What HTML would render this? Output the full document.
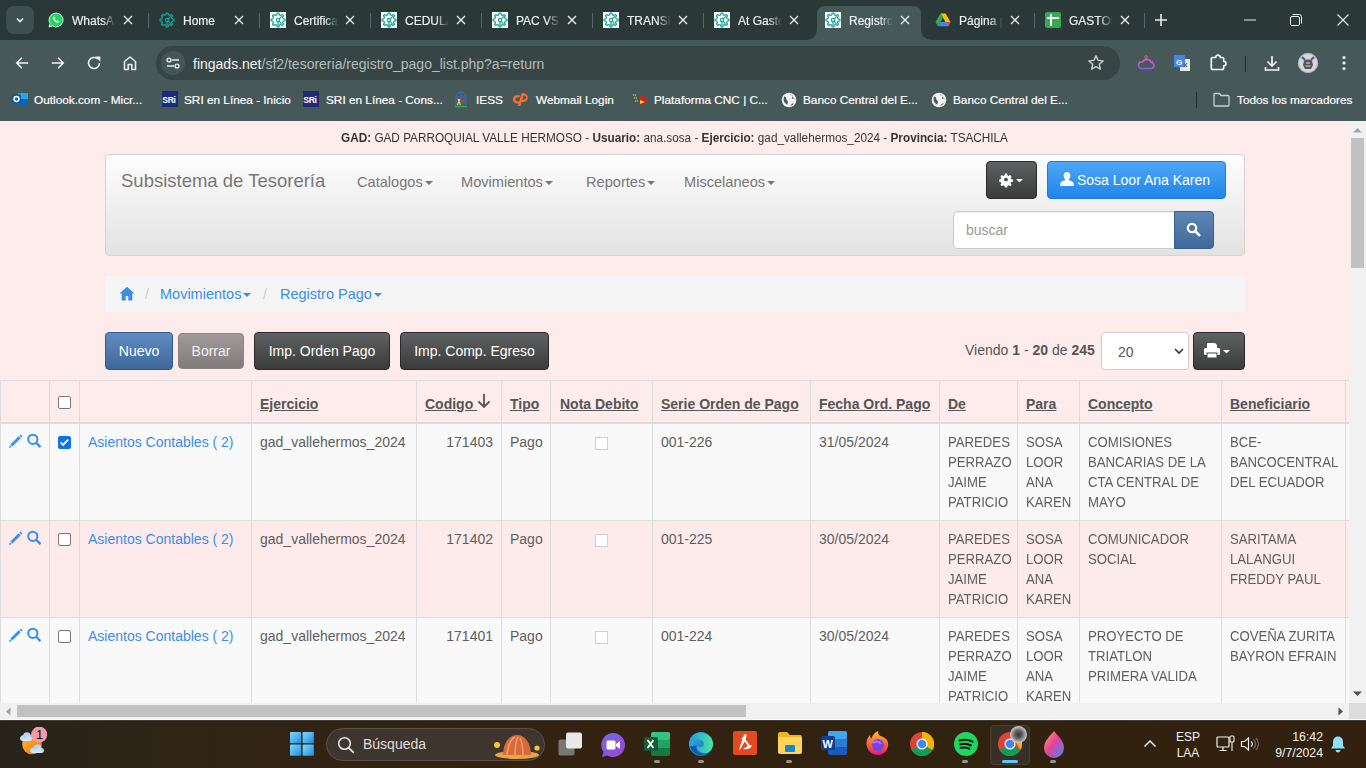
<!DOCTYPE html>
<html><head><meta charset="utf-8">
<style>
*{box-sizing:border-box}
html,body{margin:0;padding:0;width:1366px;height:768px;overflow:hidden;font-family:"Liberation Sans",sans-serif}
.abs{position:absolute}
#tabs{position:absolute;left:0;top:0;width:1366px;height:40px;background:#2b3838}
#toolbar{position:absolute;left:0;top:40px;width:1366px;height:44px;background:#465857}
#bm{position:absolute;left:0;top:84px;width:1366px;height:37px;background:#465857}
#page{position:absolute;left:0;top:121px;width:1349px;height:582px;background:#feecec;overflow:hidden}
#vscroll{position:absolute;left:1349px;top:121px;width:17px;height:582px;background:#f1f1f1}
#hscroll{position:absolute;left:0;top:703px;width:1349px;height:16px;background:#f1f1f1;border-bottom:0}
#corner{position:absolute;left:1349px;top:703px;width:17px;height:16px;background:#dcdcdc}
#wline{position:absolute;left:0;top:719px;width:1366px;height:1px;background:#fafafa}
#taskbar{position:absolute;left:0;top:720px;width:1366px;height:48px;background:linear-gradient(90deg,#28231a 0%,#2f2415 12%,#33220f 45%,#30230f 70%,#33200f 100%)}
.tab{position:absolute;top:0;height:40px;width:111px;color:#eef2f2;font-size:12px;-webkit-text-stroke:.15px #eef2f2}
.tab .fav{position:absolute;left:8px;top:12px;width:16px;height:16px}
.tab .tt{position:absolute;left:32px;top:14px;width:44px;overflow:hidden;white-space:nowrap;-webkit-mask-image:linear-gradient(90deg,#000 70%,transparent)}
.tab .x{position:absolute;left:82px;top:14px;width:12px;height:12px}
.tab.act{color:#f2f4f4}
.bmt{position:absolute;top:92px;font-size:11.8px;line-height:16px;color:#fff;white-space:nowrap;-webkit-text-stroke:.2px #fff}
.nav{position:absolute;top:51px;font-size:14.6px;color:#777;line-height:20px;white-space:nowrap}
.caret{display:inline-block;width:0;height:0;margin-left:2px;vertical-align:middle;border-top:4px solid;border-left:4px solid transparent;border-right:4px solid transparent}
.btn{border-radius:4px;color:#fff;font-size:14px;text-align:center;display:flex;align-items:center;justify-content:center;white-space:nowrap}
.dark{background:linear-gradient(#5f6262,#3a3b3b);border:1px solid #2a2a2a}
.blue{background:linear-gradient(#4fa6f5,#1f86ea);border:1px solid #1c7ae0}
.navy{background:linear-gradient(#5f86b5,#3e6a9b);border:1px solid #36608f}
.navy2{background:linear-gradient(#5f8cc2,#3d6899);border:1px solid #2f5a8a}
.gray{background:linear-gradient(#a09a9a,#817b7b);border:1px solid #8a8585;opacity:1;color:#f3f3f3}
.crumb{top:164px;font-size:14.5px;color:#3a8ee6;line-height:18px;white-space:nowrap}
.crumbsep{top:164px;font-size:14px;color:#ccc;line-height:18px}
.th{position:absolute;top:273px;font-size:14px;font-weight:bold;color:#555;text-decoration:underline;line-height:20px;white-space:nowrap}
.td{position:absolute;font-size:14px;color:#5e5e5e;line-height:20px;white-space:nowrap}
.link{color:#3a8ee6}
.cb{position:absolute;width:13px;height:13px;border:1px solid #767676;border-radius:2px;background:#fff}
.chk{background:#0c72f0;border-color:#0c72f0}
.cbd{position:absolute;width:13px;height:13px;border:1px solid #d0d0d0;border-radius:0;background:#fff}
.dot{position:absolute;top:40px;width:6px;height:3px;border-radius:2px;background:#9a928a}
.up{transform:scaleX(.94);transform-origin:0 0}
.sep{position:absolute;top:13px;width:1px;height:15px;background:#55696a}
</style></head><body>
<div id="tabs">
<div class="abs" style="left:6px;top:6px;width:28px;height:28px;border-radius:8px;background:#3f4f4f"></div>
<svg class="abs" style="left:14px;top:14px" width="12" height="12" viewBox="0 0 12 12"><path d="M3 4.5l3 3 3-3" fill="none" stroke="#e8ecec" stroke-width="1.6"/></svg>
<svg class="abs" style="left:805px;top:6px" width="128" height="34" viewBox="0 0 128 34"><path d="M0 34 Q12 34 12 22 V8 Q12 0 20 0 H108 Q116 0 116 8 V22 Q116 34 128 34 Z" fill="#465857"/></svg>
<div class="tab" style="left:40px"><svg class="fav" viewBox="0 0 16 16"><path d="M8 1a7 7 0 0 0-6 10.6L1 15l3.5-1A7 7 0 1 0 8 1z" fill="#25d366" stroke="#fff" stroke-width=".8"/><path d="M5.6 4.6c.3-.2.6-.2.8.1l.7 1.3c.1.3 0 .5-.2.7l-.3.3c.4.9 1.1 1.6 2 2l.3-.3c.2-.2.4-.3.7-.2l1.3.7c.3.2.3.5.1.8-.5.8-1.3 1-2.2.6-1.6-.7-2.8-1.9-3.5-3.5-.3-.9-.2-1.7.3-2.5z" fill="#fff"/></svg><div class="tt">WhatsA</div><svg class="x" viewBox="0 0 12 12"><path d="M2 2l8 8M10 2l-8 8" stroke="#e8ecec" stroke-width="1.4"/></svg></div>
<div class="tab" style="left:151px"><svg class="fav" viewBox="0 0 16 16"><g fill="none" stroke="#1aa597" stroke-width="1.25" stroke-linejoin="round"><path d="M7.01 1.07 L8.99 1.07 L9.24 2.85 L10.77 3.48 L12.20 2.40 L13.60 3.80 L12.52 5.23 L13.15 6.76 L14.93 7.01 L14.93 8.99 L13.15 9.24 L12.52 10.77 L13.60 12.20 L12.20 13.60 L10.77 12.52 L9.24 13.15 L8.99 14.93 L7.01 14.93 L6.76 13.15 L5.23 12.52 L3.80 13.60 L2.40 12.20 L3.48 10.77 L2.85 9.24 L1.07 8.99 L1.07 7.01 L2.85 6.76 L3.48 5.23 L2.40 3.80 L3.80 2.40 L5.23 3.48 L6.76 2.85Z"/><circle cx="8" cy="8" r="1.6"/><path d="M8 9.6v4.2M9.2 7l2.6-2.6M9.2 9.2l2.2 2.6"/></g></svg><div class="tt">Home</div><svg class="x" viewBox="0 0 12 12"><path d="M2 2l8 8M10 2l-8 8" stroke="#e8ecec" stroke-width="1.4"/></svg></div>
<div class="sep" style="left:148px"></div>
<div class="tab" style="left:262px"><svg class="fav" viewBox="0 0 16 16"><rect width="16" height="16" fill="#fff"/><g fill="none" stroke="#1aa597" stroke-width="1.25" stroke-linejoin="round"><path d="M7.01 1.07 L8.99 1.07 L9.24 2.85 L10.77 3.48 L12.20 2.40 L13.60 3.80 L12.52 5.23 L13.15 6.76 L14.93 7.01 L14.93 8.99 L13.15 9.24 L12.52 10.77 L13.60 12.20 L12.20 13.60 L10.77 12.52 L9.24 13.15 L8.99 14.93 L7.01 14.93 L6.76 13.15 L5.23 12.52 L3.80 13.60 L2.40 12.20 L3.48 10.77 L2.85 9.24 L1.07 8.99 L1.07 7.01 L2.85 6.76 L3.48 5.23 L2.40 3.80 L3.80 2.40 L5.23 3.48 L6.76 2.85Z"/><circle cx="8" cy="8" r="1.6"/><path d="M8 9.6v4.2M9.2 7l2.6-2.6M9.2 9.2l2.2 2.6"/></g></svg><div class="tt">Certifica</div><svg class="x" viewBox="0 0 12 12"><path d="M2 2l8 8M10 2l-8 8" stroke="#e8ecec" stroke-width="1.4"/></svg></div>
<div class="sep" style="left:259px"></div>
<div class="tab" style="left:373px"><svg class="fav" viewBox="0 0 16 16"><rect width="16" height="16" fill="#fff"/><g fill="none" stroke="#1aa597" stroke-width="1.25" stroke-linejoin="round"><path d="M7.01 1.07 L8.99 1.07 L9.24 2.85 L10.77 3.48 L12.20 2.40 L13.60 3.80 L12.52 5.23 L13.15 6.76 L14.93 7.01 L14.93 8.99 L13.15 9.24 L12.52 10.77 L13.60 12.20 L12.20 13.60 L10.77 12.52 L9.24 13.15 L8.99 14.93 L7.01 14.93 L6.76 13.15 L5.23 12.52 L3.80 13.60 L2.40 12.20 L3.48 10.77 L2.85 9.24 L1.07 8.99 L1.07 7.01 L2.85 6.76 L3.48 5.23 L2.40 3.80 L3.80 2.40 L5.23 3.48 L6.76 2.85Z"/><circle cx="8" cy="8" r="1.6"/><path d="M8 9.6v4.2M9.2 7l2.6-2.6M9.2 9.2l2.2 2.6"/></g></svg><div class="tt">CEDULA</div><svg class="x" viewBox="0 0 12 12"><path d="M2 2l8 8M10 2l-8 8" stroke="#e8ecec" stroke-width="1.4"/></svg></div>
<div class="sep" style="left:370px"></div>
<div class="tab" style="left:484px"><svg class="fav" viewBox="0 0 16 16"><rect width="16" height="16" fill="#fff"/><g fill="none" stroke="#1aa597" stroke-width="1.25" stroke-linejoin="round"><path d="M7.01 1.07 L8.99 1.07 L9.24 2.85 L10.77 3.48 L12.20 2.40 L13.60 3.80 L12.52 5.23 L13.15 6.76 L14.93 7.01 L14.93 8.99 L13.15 9.24 L12.52 10.77 L13.60 12.20 L12.20 13.60 L10.77 12.52 L9.24 13.15 L8.99 14.93 L7.01 14.93 L6.76 13.15 L5.23 12.52 L3.80 13.60 L2.40 12.20 L3.48 10.77 L2.85 9.24 L1.07 8.99 L1.07 7.01 L2.85 6.76 L3.48 5.23 L2.40 3.80 L3.80 2.40 L5.23 3.48 L6.76 2.85Z"/><circle cx="8" cy="8" r="1.6"/><path d="M8 9.6v4.2M9.2 7l2.6-2.6M9.2 9.2l2.2 2.6"/></g></svg><div class="tt">PAC VS</div><svg class="x" viewBox="0 0 12 12"><path d="M2 2l8 8M10 2l-8 8" stroke="#e8ecec" stroke-width="1.4"/></svg></div>
<div class="sep" style="left:481px"></div>
<div class="tab" style="left:595px"><svg class="fav" viewBox="0 0 16 16"><rect width="16" height="16" fill="#fff"/><g fill="none" stroke="#1aa597" stroke-width="1.25" stroke-linejoin="round"><path d="M7.01 1.07 L8.99 1.07 L9.24 2.85 L10.77 3.48 L12.20 2.40 L13.60 3.80 L12.52 5.23 L13.15 6.76 L14.93 7.01 L14.93 8.99 L13.15 9.24 L12.52 10.77 L13.60 12.20 L12.20 13.60 L10.77 12.52 L9.24 13.15 L8.99 14.93 L7.01 14.93 L6.76 13.15 L5.23 12.52 L3.80 13.60 L2.40 12.20 L3.48 10.77 L2.85 9.24 L1.07 8.99 L1.07 7.01 L2.85 6.76 L3.48 5.23 L2.40 3.80 L3.80 2.40 L5.23 3.48 L6.76 2.85Z"/><circle cx="8" cy="8" r="1.6"/><path d="M8 9.6v4.2M9.2 7l2.6-2.6M9.2 9.2l2.2 2.6"/></g></svg><div class="tt">TRANSF</div><svg class="x" viewBox="0 0 12 12"><path d="M2 2l8 8M10 2l-8 8" stroke="#e8ecec" stroke-width="1.4"/></svg></div>
<div class="sep" style="left:592px"></div>
<div class="tab" style="left:706px"><svg class="fav" viewBox="0 0 16 16"><rect width="16" height="16" fill="#fff"/><g fill="none" stroke="#1aa597" stroke-width="1.25" stroke-linejoin="round"><path d="M7.01 1.07 L8.99 1.07 L9.24 2.85 L10.77 3.48 L12.20 2.40 L13.60 3.80 L12.52 5.23 L13.15 6.76 L14.93 7.01 L14.93 8.99 L13.15 9.24 L12.52 10.77 L13.60 12.20 L12.20 13.60 L10.77 12.52 L9.24 13.15 L8.99 14.93 L7.01 14.93 L6.76 13.15 L5.23 12.52 L3.80 13.60 L2.40 12.20 L3.48 10.77 L2.85 9.24 L1.07 8.99 L1.07 7.01 L2.85 6.76 L3.48 5.23 L2.40 3.80 L3.80 2.40 L5.23 3.48 L6.76 2.85Z"/><circle cx="8" cy="8" r="1.6"/><path d="M8 9.6v4.2M9.2 7l2.6-2.6M9.2 9.2l2.2 2.6"/></g></svg><div class="tt">At Gasto</div><svg class="x" viewBox="0 0 12 12"><path d="M2 2l8 8M10 2l-8 8" stroke="#e8ecec" stroke-width="1.4"/></svg></div>
<div class="sep" style="left:703px"></div>
<div class="tab act" style="left:817px"><svg class="fav" viewBox="0 0 16 16"><rect width="16" height="16" fill="#fff"/><g fill="none" stroke="#1aa597" stroke-width="1.25" stroke-linejoin="round"><path d="M7.01 1.07 L8.99 1.07 L9.24 2.85 L10.77 3.48 L12.20 2.40 L13.60 3.80 L12.52 5.23 L13.15 6.76 L14.93 7.01 L14.93 8.99 L13.15 9.24 L12.52 10.77 L13.60 12.20 L12.20 13.60 L10.77 12.52 L9.24 13.15 L8.99 14.93 L7.01 14.93 L6.76 13.15 L5.23 12.52 L3.80 13.60 L2.40 12.20 L3.48 10.77 L2.85 9.24 L1.07 8.99 L1.07 7.01 L2.85 6.76 L3.48 5.23 L2.40 3.80 L3.80 2.40 L5.23 3.48 L6.76 2.85Z"/><circle cx="8" cy="8" r="1.6"/><path d="M8 9.6v4.2M9.2 7l2.6-2.6M9.2 9.2l2.2 2.6"/></g></svg><div class="tt">Registro</div><svg class="x" viewBox="0 0 12 12"><path d="M2 2l8 8M10 2l-8 8" stroke="#e8ecec" stroke-width="1.4"/></svg></div>
<div class="tab" style="left:927px"><svg class="fav" viewBox="0 0 16 16"><path d="M5.5 1.5h5l5 8.5-2.5 4.3z" fill="#fbbc04"/><path d="M5.5 1.5L.5 10l2.5 4.3 5-8.6z" fill="#34a853"/><path d="M3 14.3h10l2.5-4.3h-10z" fill="#4285f4"/><path d="M13 14.3l2.5-4.3h-3z" fill="#ea4335"/></svg><div class="tt">Página p</div><svg class="x" viewBox="0 0 12 12"><path d="M2 2l8 8M10 2l-8 8" stroke="#e8ecec" stroke-width="1.4"/></svg></div>
<div class="tab" style="left:1037px"><svg class="fav" viewBox="0 0 16 16"><rect x="0" y="0" width="16" height="16" rx="2" fill="#34a853"/><path d="M2 6h12M6 2v12" stroke="#fff" stroke-width="2"/></svg><div class="tt">GASTOS</div><svg class="x" viewBox="0 0 12 12"><path d="M2 2l8 8M10 2l-8 8" stroke="#e8ecec" stroke-width="1.4"/></svg></div>
<div class="sep" style="left:1034px"></div>
<div class="sep" style="left:1144px"></div>
<svg class="abs" style="left:1154px;top:13px" width="14" height="14" viewBox="0 0 14 14"><path d="M7 1v12M1 7h12" stroke="#e8ecec" stroke-width="1.6"/></svg>
<svg class="abs" style="left:1244px;top:19px" width="12" height="2" viewBox="0 0 12 2"><path d="M0 1h12" stroke="#e8ecec" stroke-width="1"/></svg>
<svg class="abs" style="left:1290px;top:14px" width="12" height="12" viewBox="0 0 12 12"><rect x="0.5" y="2.5" width="9" height="9" rx="1.5" fill="none" stroke="#e8ecec"/><path d="M2.5 .5h7a2 2 0 0 1 2 2v7" fill="none" stroke="#e8ecec"/></svg>
<svg class="abs" style="left:1337px;top:14px" width="12" height="12" viewBox="0 0 12 12"><path d="M.5 .5l11 11M11.5 .5l-11 11" stroke="#e8ecec" stroke-width="1.1"/></svg>
</div>
<div id="toolbar"></div>
<svg class="abs" style="left:13px;top:54px" width="18" height="18" viewBox="0 0 18 18"><path d="M15.2 9H3.8M9 3.8L3.8 9 9 14.2" fill="none" stroke="#eef2f2" stroke-width="1.6"/></svg>
<svg class="abs" style="left:49px;top:54px" width="18" height="18" viewBox="0 0 18 18"><path d="M2.8 9h11.4M9 3.8L14.2 9 9 14.2" fill="none" stroke="#eef2f2" stroke-width="1.6"/></svg>
<svg class="abs" style="left:85px;top:54px" width="18" height="18" viewBox="0 0 18 18"><path d="M14.5 9a5.5 5.5 0 1 1-1.8-4.1" fill="none" stroke="#eef2f2" stroke-width="1.6"/><path d="M10.2 2.6h5.2v5.2z" fill="#eef2f2"/></svg>
<svg class="abs" style="left:121px;top:54px" width="18" height="18" viewBox="0 0 18 18"><path d="M3.5 15.5V7.5L9 3l5.5 4.5v8h-3.7v-5H7.2v5z" fill="none" stroke="#e8ecec" stroke-width="1.6" stroke-linejoin="round"/></svg>
<div class="abs" style="left:156px;top:46px;width:964px;height:34px;border-radius:17px;background:#374545"></div>
<div class="abs" style="left:161px;top:51px;width:24px;height:24px;border-radius:12px;background:#465656"></div>
<svg class="abs" style="left:165px;top:55px" width="16" height="16" viewBox="0 0 16 16"><path d="M7 5h7M2 11h7" stroke="#e8ecec" stroke-width="1.5"/><circle cx="4" cy="5" r="1.9" fill="none" stroke="#e8ecec" stroke-width="1.4"/><circle cx="12" cy="11" r="1.9" fill="none" stroke="#e8ecec" stroke-width="1.4"/></svg>
<div class="abs" style="left:193px;top:55px;font-size:14px;color:#f2f4f4;white-space:nowrap;line-height:18px">fingads.net<span style="color:#b3bdbd">/sf2/tesoreria/registro_pago_list.php?a=return</span></div>
<svg class="abs" style="left:1087px;top:54px" width="18" height="18" viewBox="0 0 18 18"><path d="M9 1.8l2.1 4.6 5 .5-3.8 3.4 1.1 4.9L9 12.7l-4.4 2.5 1.1-4.9L1.9 6.9l5-.5z" fill="none" stroke="#c8d0d0" stroke-width="1.4" stroke-linejoin="round"/></svg>
<svg class="abs" style="left:1137px;top:55px" width="18" height="16" viewBox="0 0 18 16"><defs><linearGradient id="wg" x1="0" y1="0" x2="0" y2="1"><stop offset="0" stop-color="#e05ab0"/><stop offset="1" stop-color="#8a5cf0"/></linearGradient></defs><path d="M4 13.5h10a3 3 0 0 0 .2-6A4.5 4.5 0 0 0 5.8 7 3.2 3.2 0 0 0 4 13.5z" fill="none" stroke="url(#wg)" stroke-width="1.6"/><circle cx="9" cy="2" r="1.3" fill="none" stroke="#e05ab0" stroke-width="1"/><path d="M2 6l1 .5M16 6l-1 .5" stroke="#e05ab0" stroke-width="1.2"/></svg>
<svg class="abs" style="left:1173px;top:54px" width="18" height="18" viewBox="0 0 18 18"><rect x="7" y="5" width="10" height="12" fill="#e8e8e8"/><rect x="1" y="1" width="11" height="12" fill="#4285f4"/><text x="3" y="10.5" font-size="8" font-weight="bold" fill="#fff" font-family="Liberation Sans">G</text><path d="M11 9l3 4M14 9l-3 4" stroke="#555" stroke-width="1"/></svg>
<svg class="abs" style="left:1209px;top:53px" width="20" height="19" viewBox="0 0 20 19"><path d="M3.5 4.5h3.2a2.3 2.3 0 0 1 4.6 0h2.2a1.2 1.2 0 0 1 1.2 1.2v2.6a2.3 2.3 0 0 1 0 4.6v2.4a1.2 1.2 0 0 1-1.2 1.2H3.5a1.2 1.2 0 0 1-1.2-1.2V5.7a1.2 1.2 0 0 1 1.2-1.2z" fill="none" stroke="#f4f6f6" stroke-width="1.7" stroke-linejoin="round"/></svg>
<div class="abs" style="left:1245px;top:56px;width:1px;height:16px;background:#222c2c"></div>
<svg class="abs" style="left:1263px;top:54px" width="18" height="18" viewBox="0 0 18 18"><path d="M9 2v10M4.5 7.5L9 12l4.5-4.5M2.5 13v3h13v-3" fill="none" stroke="#f0f2f2" stroke-width="1.7"/></svg>
<svg class="abs" style="left:1298px;top:53px" width="20" height="20" viewBox="0 0 20 20"><circle cx="10" cy="10" r="10" fill="#d8d4dc"/><path d="M4 4l3 3M16 4l-3 3" stroke="#2a5db0" stroke-width="2"/><path d="M6 8c1-2 7-2 8 0l1 4-2 4H7l-2-4z" fill="#555"/><path d="M8 10h4M7.5 13h5" stroke="#ddd" stroke-width="1"/><circle cx="10" cy="10" r="9.5" fill="none" stroke="#b8b4bc" stroke-width="1"/></svg>
<svg class="abs" style="left:1341px;top:54px" width="6" height="18" viewBox="0 0 6 18"><circle cx="3" cy="3.5" r="1.6" fill="#f0f2f2"/><circle cx="3" cy="9" r="1.6" fill="#f0f2f2"/><circle cx="3" cy="14.5" r="1.6" fill="#f0f2f2"/></svg>

<div id="bm"></div>
<svg class="abs" style="left:12px;top:91px" width="16" height="16" viewBox="0 0 16 16"><rect x="6" y="2" width="10" height="12" fill="#28a8ea"/><rect x="6" y="8" width="10" height="6" fill="#0364b8"/><rect x="0" y="3.5" width="9" height="9" rx="1" fill="#0a5aa8"/><circle cx="4.5" cy="8" r="2.4" fill="none" stroke="#fff" stroke-width="1.5"/></svg>
<div class="bmt" style="left:34px">Outlook.com - Micr...</div>
<svg class="abs" style="left:162px;top:91px" width="16" height="16" viewBox="0 0 16 16"><rect width="16" height="16" fill="#1e2a78"/><text x="0.3" y="12" font-size="8.6" font-weight="bold" fill="#fff" font-family="Liberation Sans" letter-spacing="-.4">SRi</text></svg>
<div class="bmt" style="left:184px">SRI en Línea - Inicio</div>
<svg class="abs" style="left:303px;top:91px" width="16" height="16" viewBox="0 0 16 16"><rect width="16" height="16" fill="#1e2a78"/><text x="0.3" y="12" font-size="8.6" font-weight="bold" fill="#fff" font-family="Liberation Sans" letter-spacing="-.4">SRi</text></svg>
<div class="bmt" style="left:326px">SRI en Línea - Cons...</div>
<svg class="abs" style="left:453px;top:91px" width="16" height="17" viewBox="0 0 16 17"><path d="M3 14V6a5 5 0 0 1 10 0v8" fill="none" stroke="#3a6fd8" stroke-width="1"/><path d="M5 14V4.5M7 14V2.5M9 14V2.5M11 14V4.5" stroke="#3a6fd8" stroke-width=".8"/><circle cx="6" cy="9" r="1.3" fill="#f0d020"/><path d="M4.5 14l1.5-4 1.5 4" stroke="#f0d020" stroke-width="1.2" fill="none"/><circle cx="10" cy="10" r="1.2" fill="#e03030"/><path d="M2 15.5h12" stroke="#30b040" stroke-width="1.5"/></svg>
<div class="bmt" style="left:476px">IESS</div>
<svg class="abs" style="left:512px;top:92px" width="18" height="15" viewBox="0 0 18 15"><path d="M8.2 3.2H5a4.2 4.2 0 0 0 0 8.4h1.6l.9-2.4H5.2a1.8 1.8 0 0 1 0-3.6h2.1z" fill="#ff6c2c"/><path d="M9.6 1.2L5.9 14h2.5l1.2-4h1.8a4.4 4.4 0 0 0 0-8.8zm1.9 2.3h.3a2.1 2.1 0 0 1 0 4.2h-1.3z" fill="#ff6c2c"/></svg>
<div class="bmt" style="left:536px">Webmail Login</div>
<svg class="abs" style="left:631px;top:91px" width="17" height="16" viewBox="0 0 17 16"><path d="M2 4h3M3 7h3M4 10h3" stroke="#e0c030" stroke-width="1.5" stroke-dasharray="1.2 .8"/><path d="M8 5a6 6 0 0 1 8 6l-7 3z" fill="#d02020"/><path d="M9 9l5 2-5 2z" fill="#f0d020"/></svg>
<div class="bmt" style="left:654px">Plataforma CNC | C...</div>
<svg class="abs" style="left:781px;top:92px" width="16" height="16" viewBox="0 0 16 16"><circle cx="8" cy="8" r="7.3" fill="#f2f4f4"/><path d="M3 4.5c1.5.3 2.5 1.2 2.3 2.5-.2 1 1 1.3 1.5 2.2.4 1-.5 2-.3 3.5C4.5 12 3 10 2.5 8zM9 1.8c0 1 .7 1.5 1.7 1.6 1.1.1 1.2 1.3.5 2-.8.8.2 1.6 1.2 1.3.9-.3 1.7.3 2 1.3M9.5 14.2c.2-1.4 1.2-2.3 2.2-2.6 1-.3 1.6.2 2-.5" fill="#465857"/></svg>
<div class="bmt" style="left:803px">Banco Central del E...</div>
<svg class="abs" style="left:931px;top:92px" width="16" height="16" viewBox="0 0 16 16"><circle cx="8" cy="8" r="7.3" fill="#f2f4f4"/><path d="M3 4.5c1.5.3 2.5 1.2 2.3 2.5-.2 1 1 1.3 1.5 2.2.4 1-.5 2-.3 3.5C4.5 12 3 10 2.5 8zM9 1.8c0 1 .7 1.5 1.7 1.6 1.1.1 1.2 1.3.5 2-.8.8.2 1.6 1.2 1.3.9-.3 1.7.3 2 1.3M9.5 14.2c.2-1.4 1.2-2.3 2.2-2.6 1-.3 1.6.2 2-.5" fill="#465857"/></svg>
<div class="bmt" style="left:953px">Banco Central del E...</div>
<div class="abs" style="left:1196px;top:92px;width:1px;height:16px;background:#222c2c"></div>
<svg class="abs" style="left:1213px;top:92px" width="17" height="15" viewBox="0 0 17 15"><path d="M1 2.5a1 1 0 0 1 1-1h4.5l1.5 2h7a1 1 0 0 1 1 1V13a1 1 0 0 1-1 1H2a1 1 0 0 1-1-1z" fill="none" stroke="#c8d0d0" stroke-width="1.3"/></svg>
<div class="bmt" style="left:1237px">Todos los marcadores</div>

<div id="page">
<div class="abs" style="left:0;top:9px;width:1349px;text-align:center;font-size:12px;color:#333;line-height:16px;transform:scaleX(.98);transform-origin:675px 0"><b>GAD:</b> GAD PARROQUIAL VALLE HERMOSO - <b>Usuario:</b> ana.sosa - <b>Ejercicio:</b> gad_vallehermos_2024 - <b>Provincia:</b> TSACHILA</div>
<div class="abs" style="left:105px;top:33px;width:1140px;height:102px;border:1px solid #d4d4d4;border-radius:4px;background:linear-gradient(#ffffff 0%,#fbfbfb 8%,#e2e2e2 100%)"></div>
<div class="abs" style="left:121px;top:49px;font-size:18.5px;color:#777;line-height:22px;white-space:nowrap">Subsistema de Tesorería</div>
<div class="nav" style="left:357px">Catalogos<span class="caret"></span></div>
<div class="nav" style="left:461px">Movimientos<span class="caret"></span></div>
<div class="nav" style="left:586px">Reportes<span class="caret"></span></div>
<div class="nav" style="left:684px">Miscelaneos<span class="caret"></span></div>
<div class="abs btn dark" style="left:986px;top:40px;width:51px;height:38px"></div>
<svg class="abs" style="left:998px;top:50px" width="28" height="18" viewBox="0 0 28 18"><g transform="translate(8,8.5) scale(.85)"><path d="M-1.2-7h2.4l.4 2 1.5.8 1.8-1.1 1.7 1.7-1.1 1.8.7 1.5 2 .4v2.4l-2 .4-.7 1.5 1.1 1.8-1.7 1.7-1.8-1.1-1.5.7-.4 2h-2.4l-.4-2-1.5-.7-1.8 1.1-1.7-1.7 1.1-1.8-.7-1.5-2-.4v-2.4l2-.4.7-1.5-1.1-1.8 1.7-1.7 1.8 1.1 1.5-.8z" fill="#fff"/><circle r="2.2" fill="#474747"/></g><path d="M18 8h7l-3.5 3.5z" fill="#fff"/></svg>
<div class="abs btn blue" style="left:1047px;top:40px;width:179px;height:38px"></div>
<svg class="abs" style="left:1059px;top:50px" width="16" height="16" viewBox="0 0 16 16"><path d="M8 1c2.2 0 3.3 1.6 3.3 3.8 0 1.5-.7 3-1.6 3.7v.8c2.6.7 5 1.6 5 3.7V15H1.3v-2c0-2.1 2.4-3 5-3.7v-.8c-.9-.7-1.6-2.2-1.6-3.7C4.7 2.6 5.8 1 8 1z" fill="#fff"/></svg>
<div class="abs" style="left:1077px;top:49px;font-size:14px;color:#fff;line-height:20px;white-space:nowrap">Sosa Loor Ana Karen</div>
<div class="abs" style="left:953px;top:90px;width:222px;height:38px;background:#fff;border:1px solid #ccc;border-radius:4px 0 0 4px;box-shadow:inset 0 1px 1px rgba(0,0,0,.075)"></div>
<div class="abs" style="left:966px;top:100px;font-size:14px;color:#999;line-height:18px">buscar</div>
<div class="abs btn navy" style="left:1174px;top:90px;width:40px;height:38px;border-radius:0 4px 4px 0"></div>
<svg class="abs" style="left:1186px;top:101px" width="15" height="15" viewBox="0 0 15 15"><circle cx="6" cy="6" r="4.2" fill="none" stroke="#fff" stroke-width="2.2"/><path d="M9 9l4.2 4.2" stroke="#fff" stroke-width="2.6" stroke-linecap="round"/></svg>

<div class="abs" style="left:105px;top:155px;width:1140px;height:36px;background:#f5f5f5;border-radius:4px"></div>
<svg class="abs" style="left:119px;top:165px" width="16" height="15" viewBox="0 0 16 15"><path d="M8 .8L.5 7.6h2.2V14.5h4v-4.5h2.6v4.5h4V7.6h2.2z" fill="#3a8ee6"/></svg>
<div class="abs crumbsep" style="left:145px">/</div>
<div class="abs crumb" style="left:160px">Movimientos<span class="caret"></span></div>
<div class="abs crumbsep" style="left:263px">/</div>
<div class="abs crumb" style="left:280px">Registro Pago<span class="caret"></span></div>

<div class="abs btn navy2" style="left:105px;top:211px;width:68px;height:38px"><span>Nuevo</span></div>
<div class="abs btn gray" style="left:178px;top:212px;width:66px;height:36px"><span>Borrar</span></div>
<div class="abs btn dark" style="left:254px;top:211px;width:136px;height:38px"><span>Imp. Orden Pago</span></div>
<div class="abs btn dark" style="left:400px;top:211px;width:149px;height:38px"><span>Imp. Comp. Egreso</span></div>
<div class="abs" style="left:965px;top:220px;font-size:14px;color:#555;line-height:18px;white-space:nowrap">Viendo <b>1</b> - <b>20</b> de <b>245</b></div>
<div class="abs" style="left:1101px;top:211px;width:88px;height:38px;background:#fff;border:1px solid #ccc;border-radius:4px"></div>
<div class="abs" style="left:1118px;top:222px;font-size:14px;color:#555;line-height:18px">20</div>
<svg class="abs" style="left:1174px;top:226px" width="10" height="8" viewBox="0 0 10 8"><path d="M1 2l4 4 4-4" fill="none" stroke="#333" stroke-width="1.6"/></svg>
<div class="abs btn dark" style="left:1193px;top:211px;width:52px;height:38px"></div>
<svg class="abs" style="left:1204px;top:221px" width="30" height="18" viewBox="0 0 30 18"><path d="M3 1h8l2 2v3H3z" fill="#fff"/><rect x="0" y="6" width="16" height="7" rx="1.2" fill="#fff"/><rect x="3" y="11" width="10" height="5" fill="#fff" stroke="#474747" stroke-width="1"/><path d="M19 8h7l-3.5 3.5z" fill="#fff"/></svg>
<!--TABLE-->
<div class="abs" style="left:0;top:303px;width:1349px;height:96px;background:#f9f9f9"></div>
<div class="abs" style="left:0;top:400px;width:1349px;height:96px;background:#fdebeb"></div>
<div class="abs" style="left:0;top:497px;width:1349px;height:200px;background:#f9f9f9"></div>
<div class="abs" style="left:0;top:259px;width:1349px;height:1px;background:#ddd"></div>
<div class="abs" style="left:0;top:301px;width:1349px;height:2px;background:#ddd"></div>
<div class="abs" style="left:0;top:399px;width:1349px;height:1px;background:#ddd"></div>
<div class="abs" style="left:0;top:496px;width:1349px;height:1px;background:#ddd"></div>
<div class="abs" style="left:0px;top:259px;width:1px;height:400px;background:#ddd"></div>
<div class="abs" style="left:49px;top:259px;width:1px;height:400px;background:#ddd"></div>
<div class="abs" style="left:79px;top:259px;width:1px;height:400px;background:#ddd"></div>
<div class="abs" style="left:251px;top:259px;width:1px;height:400px;background:#ddd"></div>
<div class="abs" style="left:416px;top:259px;width:1px;height:400px;background:#ddd"></div>
<div class="abs" style="left:501px;top:259px;width:1px;height:400px;background:#ddd"></div>
<div class="abs" style="left:550px;top:259px;width:1px;height:400px;background:#ddd"></div>
<div class="abs" style="left:652px;top:259px;width:1px;height:400px;background:#ddd"></div>
<div class="abs" style="left:810px;top:259px;width:1px;height:400px;background:#ddd"></div>
<div class="abs" style="left:939px;top:259px;width:1px;height:400px;background:#ddd"></div>
<div class="abs" style="left:1017px;top:259px;width:1px;height:400px;background:#ddd"></div>
<div class="abs" style="left:1079px;top:259px;width:1px;height:400px;background:#ddd"></div>
<div class="abs" style="left:1221px;top:259px;width:1px;height:400px;background:#ddd"></div>
<div class="abs" style="left:1345px;top:259px;width:1px;height:400px;background:#ddd"></div>
<div class="th" style="left:260px">Ejercicio</div>
<div class="th" style="left:425px">Codigo&nbsp;</div>
<div class="th" style="left:510px">Tipo</div>
<div class="th" style="left:560px">Nota Debito</div>
<div class="th" style="left:661px">Serie Orden de Pago</div>
<div class="th" style="left:819px">Fecha Ord. Pago</div>
<div class="th" style="left:948px">De</div>
<div class="th" style="left:1026px">Para</div>
<div class="th" style="left:1088px">Concepto</div>
<div class="th" style="left:1230px">Beneficiario</div>
<svg class="abs" style="left:477px;top:272px" width="14" height="16" viewBox="0 0 14 16"><path d="M7 1v13M1.5 8.5L7 14l5.5-5.5" fill="none" stroke="#555" stroke-width="1.8"/></svg>
<div class="cb" style="left:58px;top:275px"></div>
<svg class="abs" style="left:8px;top:312px" width="16" height="16" viewBox="0 0 16 16"><path d="M1 15l.9-2.8 1.9 1.9z" fill="#3b8ded"/><path d="M2.4 11.6l8.3-8.3 2 2-8.3 8.3z" fill="#3b8ded"/><path d="M11.4 2.6l1.2-1.2 2 2-1.2 1.2z" fill="#3b8ded"/></svg>
<svg class="abs" style="left:26px;top:312px" width="16" height="16" viewBox="0 0 16 16"><circle cx="6.8" cy="6.3" r="4.6" fill="none" stroke="#3b8ded" stroke-width="2"/><path d="M10.2 9.8l4.3 4.3" stroke="#3b8ded" stroke-width="2.3"/></svg>
<div class="cb chk" style="left:58px;top:315px"><svg width="13" height="13" viewBox="0 0 13 13" style="position:absolute;left:-1px;top:-1px"><path d="M2.7 6.4l2.5 2.5 5-5.3" fill="none" stroke="#fff" stroke-width="1.9"/></svg></div>
<div class="td link" style="left:88px;top:311px">Asientos Contables ( 2)</div>
<div class="td" style="left:260px;top:311px">gad_vallehermos_2024</div>
<div class="td" style="left:416px;width:77px;text-align:right;top:311px">171403</div>
<div class="td" style="left:510px;top:311px">Pago</div>
<div class="cbd" style="left:595px;top:316px"></div>
<div class="td" style="left:661px;top:311px">001-226</div>
<div class="td" style="left:819px;top:311px">31/05/2024</div>
<div class="td up" style="left:948px;top:311px">PAREDES<br>PERRAZO<br>JAIME<br>PATRICIO</div>
<div class="td up" style="left:1026px;top:311px">SOSA<br>LOOR<br>ANA<br>KAREN</div>
<div class="td up" style="left:1088px;top:311px">COMISIONES<br>BANCARIAS DE LA<br>CTA CENTRAL DE<br>MAYO</div>
<div class="td up" style="left:1230px;top:311px">BCE-<br>BANCOCENTRAL<br>DEL ECUADOR</div>
<svg class="abs" style="left:8px;top:409px" width="16" height="16" viewBox="0 0 16 16"><path d="M1 15l.9-2.8 1.9 1.9z" fill="#3b8ded"/><path d="M2.4 11.6l8.3-8.3 2 2-8.3 8.3z" fill="#3b8ded"/><path d="M11.4 2.6l1.2-1.2 2 2-1.2 1.2z" fill="#3b8ded"/></svg>
<svg class="abs" style="left:26px;top:409px" width="16" height="16" viewBox="0 0 16 16"><circle cx="6.8" cy="6.3" r="4.6" fill="none" stroke="#3b8ded" stroke-width="2"/><path d="M10.2 9.8l4.3 4.3" stroke="#3b8ded" stroke-width="2.3"/></svg>
<div class="cb" style="left:58px;top:412px"></div>
<div class="td link" style="left:88px;top:408px">Asientos Contables ( 2)</div>
<div class="td" style="left:260px;top:408px">gad_vallehermos_2024</div>
<div class="td" style="left:416px;width:77px;text-align:right;top:408px">171402</div>
<div class="td" style="left:510px;top:408px">Pago</div>
<div class="cbd" style="left:595px;top:413px"></div>
<div class="td" style="left:661px;top:408px">001-225</div>
<div class="td" style="left:819px;top:408px">30/05/2024</div>
<div class="td up" style="left:948px;top:408px">PAREDES<br>PERRAZO<br>JAIME<br>PATRICIO</div>
<div class="td up" style="left:1026px;top:408px">SOSA<br>LOOR<br>ANA<br>KAREN</div>
<div class="td up" style="left:1088px;top:408px">COMUNICADOR<br>SOCIAL</div>
<div class="td up" style="left:1230px;top:408px">SARITAMA<br>LALANGUI<br>FREDDY PAUL</div>
<svg class="abs" style="left:8px;top:506px" width="16" height="16" viewBox="0 0 16 16"><path d="M1 15l.9-2.8 1.9 1.9z" fill="#3b8ded"/><path d="M2.4 11.6l8.3-8.3 2 2-8.3 8.3z" fill="#3b8ded"/><path d="M11.4 2.6l1.2-1.2 2 2-1.2 1.2z" fill="#3b8ded"/></svg>
<svg class="abs" style="left:26px;top:506px" width="16" height="16" viewBox="0 0 16 16"><circle cx="6.8" cy="6.3" r="4.6" fill="none" stroke="#3b8ded" stroke-width="2"/><path d="M10.2 9.8l4.3 4.3" stroke="#3b8ded" stroke-width="2.3"/></svg>
<div class="cb" style="left:58px;top:509px"></div>
<div class="td link" style="left:88px;top:505px">Asientos Contables ( 2)</div>
<div class="td" style="left:260px;top:505px">gad_vallehermos_2024</div>
<div class="td" style="left:416px;width:77px;text-align:right;top:505px">171401</div>
<div class="td" style="left:510px;top:505px">Pago</div>
<div class="cbd" style="left:595px;top:510px"></div>
<div class="td" style="left:661px;top:505px">001-224</div>
<div class="td" style="left:819px;top:505px">30/05/2024</div>
<div class="td up" style="left:948px;top:505px">PAREDES<br>PERRAZO<br>JAIME<br>PATRICIO</div>
<div class="td up" style="left:1026px;top:505px">SOSA<br>LOOR<br>ANA<br>KAREN</div>
<div class="td up" style="left:1088px;top:505px">PROYECTO DE<br>TRIATLON<br>PRIMERA VALIDA</div>
<div class="td up" style="left:1230px;top:505px">COVEÑA ZURITA<br>BAYRON EFRAIN</div>
<!--/TABLE-->
</div>

<div id="vscroll"><svg class="abs" style="left:3px;top:6px" width="11" height="6" viewBox="0 0 11 6"><path d="M1 5.5L5.5 1 10 5.5z" fill="#a3a3a3"/></svg><div class="abs" style="left:2px;top:17px;width:13px;height:130px;background:#c1c1c1"></div><svg class="abs" style="left:3px;top:570px" width="11" height="6" viewBox="0 0 11 6"><path d="M1 .5h9L5.5 5z" fill="#505050"/></svg></div>
<div id="hscroll"><svg class="abs" style="left:5px;top:4px" width="6" height="9" viewBox="0 0 6 9"><path d="M5.5 .5v8L1 4.5z" fill="#a3a3a3"/></svg><div class="abs" style="left:17px;top:2px;width:729px;height:12px;background:#c1c1c1"></div><svg class="abs" style="left:1338px;top:4px" width="6" height="9" viewBox="0 0 6 9"><path d="M.5 .5v8L5 4.5z" fill="#505050"/></svg></div>
<div id="corner"></div><div id="wline"></div>
<div id="taskbar"><div class="abs" style="left:0;top:0;width:1366px;height:1px;background:#433a32"></div>
<svg class="abs" style="left:17px;top:7px" width="32" height="34" viewBox="0 0 32 34"><defs><linearGradient id="sun" x1="0" y1="0" x2="1" y2="1"><stop offset="0" stop-color="#fbc02d"/><stop offset="1" stop-color="#f46a0a"/></linearGradient><linearGradient id="cl" x1="0" y1="0" x2="0" y2="1"><stop offset="0" stop-color="#a9c8f5"/><stop offset="1" stop-color="#dde9f8"/></linearGradient></defs><circle cx="15" cy="17.5" r="9.8" fill="url(#sun)"/><rect x="3" y="9.05" width="12.5" height="4.95" rx="2.43" fill="url(#cl)"/><circle cx="9.88" cy="9.05" r="3.78" fill="url(#cl)"/><circle cx="6.50" cy="10.58" r="2.70" fill="url(#cl)"/><rect x="13" y="21.05" width="14" height="4.95" rx="2.43" fill="url(#cl)"/><circle cx="20.70" cy="21.05" r="3.78" fill="url(#cl)"/><circle cx="16.92" cy="22.58" r="2.70" fill="url(#cl)"/><circle cx="22.2" cy="7.6" r="8" fill="#f59aa8"/><text x="19.2" y="12.3" font-size="12" fill="#000" font-family="Liberation Sans">1</text></svg>
<svg class="abs" style="left:290px;top:12px" width="24" height="24" viewBox="0 0 24 24"><defs><linearGradient id="win" x1="0" y1="0" x2="1" y2="1"><stop offset="0" stop-color="#86d8f8"/><stop offset="1" stop-color="#1a8ee8"/></linearGradient></defs><rect x="0" y="0" width="11.2" height="11.2" rx=".8" fill="url(#win)"/><rect x="12.6" y="0" width="11.2" height="11.2" rx=".8" fill="url(#win)"/><rect x="0" y="12.6" width="11.2" height="11.2" rx=".8" fill="url(#win)"/><rect x="12.6" y="12.6" width="11.2" height="11.2" rx=".8" fill="url(#win)"/></svg>
<div class="abs" style="left:326px;top:8px;width:219px;height:33px;border-radius:17px;background:#3d352e;border:1px solid #5a5048"></div>
<svg class="abs" style="left:337px;top:16px" width="18" height="18" viewBox="0 0 18 18"><circle cx="7.5" cy="7.5" r="5.8" fill="none" stroke="#e8e4e0" stroke-width="1.6"/><path d="M11.8 11.8l4.5 4.5" stroke="#e8e4e0" stroke-width="1.8" stroke-linecap="round"/></svg>
<div class="abs" style="left:363px;top:15px;font-size:14px;color:#e2ddd8;line-height:18px">Búsqueda</div>
<svg class="abs" style="left:491px;top:9px" width="52" height="30" viewBox="0 0 52 30"><ellipse cx="26" cy="26" rx="22" ry="4" fill="#e8a640"/><path d="M12 26c0-12 6-20 14-20s14 8 14 20z" fill="#d86a3a"/><path d="M16 26c1-9 4-16 8-18M24 26c0-8 1-14 3-18M32 26c0-7-1-13-3-17" stroke="#f0a070" stroke-width="1.5" fill="none"/><circle cx="6" cy="16" r="3" fill="#f5c830"/><circle cx="46" cy="19" r="2.6" fill="#f5c830"/></svg>
<svg class="abs" style="left:558px;top:12px" width="26" height="26" viewBox="0 0 26 26"><rect x="0.5" y="7.5" width="16" height="16" rx="2" fill="#7a7672"/><rect x="8" y="0.5" width="16" height="16" rx="2" fill="#e8e8e8"/></svg>
<svg class="abs" style="left:600px;top:12px" width="26" height="26" viewBox="0 0 26 26"><defs><linearGradient id="mt" x1="0" y1="0" x2="1" y2="1"><stop offset="0" stop-color="#6a6cf0"/><stop offset="1" stop-color="#a045c8"/></linearGradient></defs><path d="M13 1a12 12 0 1 1-6 22.4L2 25l1.6-5A12 12 0 0 1 13 1z" fill="url(#mt)"/><rect x="6.5" y="8.5" width="9" height="9" rx="1.5" fill="#fff"/><path d="M16 12l4-3v8l-4-3z" fill="#fff"/></svg>
<svg class="abs" style="left:644px;top:12px" width="26" height="24" viewBox="0 0 26 24"><rect x="7" y="0" width="19" height="24" rx="2" fill="#107c41"/><rect x="7" y="0" width="19" height="8" rx="2" fill="#33c481"/><rect x="7" y="8" width="19" height="8" fill="#21a366"/><rect x="0" y="5" width="14" height="14" rx="1.5" fill="#185c37"/><path d="M3.5 8l6 8M9.5 8l-6 8" stroke="#fff" stroke-width="1.8"/></svg>
<div class="dot" style="left:654px"></div>
<svg class="abs" style="left:688px;top:11px" width="26" height="26" viewBox="0 0 26 26"><defs><linearGradient id="ed1" x1="0" y1="0" x2="1" y2="1"><stop offset="0" stop-color="#35c1f1"/><stop offset="1" stop-color="#0c59a4"/></linearGradient><linearGradient id="ed2" x1="0" y1="0" x2="1" y2="0"><stop offset="0" stop-color="#1b9de2"/><stop offset="1" stop-color="#50e6a0"/></linearGradient></defs><circle cx="13" cy="13" r="12" fill="url(#ed1)"/><path d="M25 13c0-6-5-11-12-11C7 2 2 7 2 12c2-4 7-5 11-3 3 1.5 4 5 1.5 6.5-1.5 1-5 1-6-1 .5 5 5 8.5 10 7.5 4-1 6.5-5 6.5-9z" fill="url(#ed2)"/><path d="M8.5 14.5c-1 4 2 8.5 7 9-6 1.5-12-2.5-13.5-8" fill="#0c59a4"/></svg>
<div class="dot" style="left:698px"></div>
<svg class="abs" style="left:733px;top:11px" width="24" height="24" viewBox="0 0 24 24"><rect width="24" height="24" rx="2" fill="#e44a1f"/><path d="M6 20c1-5 3-11 5-16 1-2 3-1 2.5 1-1 5-3 8-7.5 15zM10 18c3-2 6-4 9-4-1 3-4 5-9 4z" fill="#fff"/><path d="M9 7c3 2 6 6 8 10" stroke="#fff" stroke-width="2" fill="none"/></svg>
<svg class="abs" style="left:777px;top:11px" width="26" height="24" viewBox="0 0 26 24"><path d="M1 3a2 2 0 0 1 2-2h7l3 3h10a2 2 0 0 1 2 2v2H1z" fill="#f0b41e"/><rect x="1" y="6" width="24" height="17" rx="2" fill="#ffd45a"/><rect x="8" y="14" width="10" height="7" rx="1" fill="#1a86d8"/></svg>
<div class="dot" style="left:786px"></div>
<svg class="abs" style="left:821px;top:11px" width="26" height="24" viewBox="0 0 26 24"><rect x="7" y="0" width="19" height="24" rx="2" fill="#185abd"/><rect x="7" y="0" width="19" height="8" rx="2" fill="#41a5ee"/><rect x="7" y="8" width="19" height="8" fill="#2b7cd3"/><rect x="0" y="5" width="14" height="14" rx="1.5" fill="#103f91"/><text x="1.5" y="16.5" font-size="11" font-weight="bold" fill="#fff" font-family="Liberation Sans">W</text></svg>
<svg class="abs" style="left:865px;top:10px" width="26" height="26" viewBox="0 0 26 26"><defs><linearGradient id="ff" x1="0" y1="0" x2="0" y2="1"><stop offset="0" stop-color="#ffbd2e"/><stop offset=".6" stop-color="#ff5a36"/><stop offset="1" stop-color="#e31587"/></linearGradient></defs><path d="M13 25a11.5 11.5 0 0 1-11-15c1-3 2.5-4 3-5 0 2 .5 3 1.5 3.5C7.5 5 10 2 13.5 1c-1 2 0 4 2 5 3 1 6 2.5 7 5 2.5 6-2 14-9.5 14z" fill="url(#ff)"/><circle cx="13" cy="15" r="6" fill="#7542e5"/><path d="M8 13c2-2 6-2 8 1" stroke="#a97cf5" stroke-width="2" fill="none"/></svg>
<svg class="abs" style="left:909px;top:11px" width="26" height="26" viewBox="0 0 26 26"><circle cx="13" cy="13" r="12" fill="#db4437"/><path d="M13 13L2.6 19A12 12 0 0 0 13 25a12 12 0 0 0 10.4-6z" fill="#0f9d58"/><path d="M13 1a12 12 0 0 1 10.4 18L13 13V1z" fill="#f4b400"/><path d="M13 7h10.4A12 12 0 0 1 23.4 19L18.2 10z" fill="#f4b400"/><path d="M13 13L23.4 19 13 25z" fill="#0f9d58" opacity="0"/><circle cx="13" cy="13" r="5.5" fill="#fff"/><circle cx="13" cy="13" r="4.3" fill="#4285f4"/></svg>
<svg class="abs" style="left:953px;top:11px" width="26" height="26" viewBox="0 0 26 26"><circle cx="13" cy="13" r="12" fill="#1ed760"/><path d="M6.5 9.5c4.5-1.3 9-1 13 1.2M7 13.3c3.8-1 7.5-.7 11 1.1M7.5 16.8c3-.7 6-.5 8.8.9" stroke="#111" stroke-width="2" stroke-linecap="round" fill="none"/></svg>
<div class="dot" style="left:962px"></div>
<div class="abs" style="left:990px;top:5px;width:40px;height:40px;border-radius:4px;background:#3a2f27;border:1px solid #4a3f36"></div>
<svg class="abs" style="left:997px;top:11px" width="26" height="26" viewBox="0 0 26 26"><circle cx="13" cy="13" r="12" fill="#db4437"/><path d="M13 13L2.6 19A12 12 0 0 0 13 25a12 12 0 0 0 10.4-6z" fill="#0f9d58"/><path d="M13 7h10.4A12 12 0 0 1 23.4 19L18.2 10z" fill="#f4b400"/><circle cx="13" cy="13" r="5.5" fill="#fff"/><circle cx="13" cy="13" r="4.3" fill="#4285f4"/></svg>
<div class="abs" style="left:1010px;top:6px;width:17px;height:17px;border-radius:9px;background:radial-gradient(circle,#333 0,#666 35%,#ccc 70%,#eee 100%)"></div>
<div class="abs" style="left:1002px;top:40px;width:16px;height:3px;border-radius:2px;background:#5cc8f5"></div>
<svg class="abs" style="left:1042px;top:10px" width="24" height="28" viewBox="0 0 24 28"><defs><linearGradient id="pn" x1="0" y1="0" x2="1" y2="1"><stop offset="0" stop-color="#ffb347"/><stop offset=".45" stop-color="#e8409a"/><stop offset="1" stop-color="#3a8ef0"/></linearGradient></defs><path d="M12 1c4 5 10 10 10 17a10 10 0 0 1-20 0C2 11 8 6 12 1z" fill="url(#pn)"/></svg>
<div class="dot" style="left:1050px"></div>
<svg class="abs" style="left:1143px;top:19px" width="14" height="9" viewBox="0 0 14 9"><path d="M1.5 7.5L7 2l5.5 5.5" fill="none" stroke="#f2f2f2" stroke-width="1.5"/></svg>
<div class="abs" style="left:1170px;top:9px;width:36px;text-align:center;font-size:12px;color:#f2f2f2;line-height:16px">ESP<br>LAA</div>
<svg class="abs" style="left:1216px;top:15px" width="20" height="18" viewBox="0 0 20 18"><rect x="1" y="2" width="12" height="10" rx="1" fill="none" stroke="#f2f2f2" stroke-width="1.2"/><path d="M7 12v3M3.5 15.5h7" stroke="#f2f2f2" stroke-width="1.2"/><rect x="14" y="1" width="4" height="6" rx="1" fill="none" stroke="#f2f2f2" stroke-width="1.1"/><path d="M16 7v9" stroke="#f2f2f2" stroke-width="1.1"/></svg>
<svg class="abs" style="left:1240px;top:16px" width="20" height="16" viewBox="0 0 20 16"><path d="M1.5 5.5h3l4-3.5v12l-4-3.5h-3z" fill="none" stroke="#f2f2f2" stroke-width="1.2"/><path d="M11 5.5a3 3 0 0 1 0 5" fill="none" stroke="#f2f2f2" stroke-width="1.2"/><path d="M13.5 3.5a6 6 0 0 1 0 9M16 2a8.5 8.5 0 0 1 0 12" fill="none" stroke="#7a7068" stroke-width="1.1"/></svg>
<div class="abs" style="left:1253px;top:9px;width:70px;text-align:right;font-size:12.3px;color:#f2f2f2;line-height:16px">16:42<br>9/7/2024</div>
<svg class="abs" style="left:1329px;top:15px" width="18" height="18" viewBox="0 0 18 18"><path d="M9 1.5a5 5 0 0 1 5 5v4l2 3H2l2-3v-4a5 5 0 0 1 5-5z" fill="#8fe0f8"/><path d="M6.5 15a2.5 2.5 0 0 0 5 0z" fill="#8fe0f8"/></svg>
</div>
</body></html>
